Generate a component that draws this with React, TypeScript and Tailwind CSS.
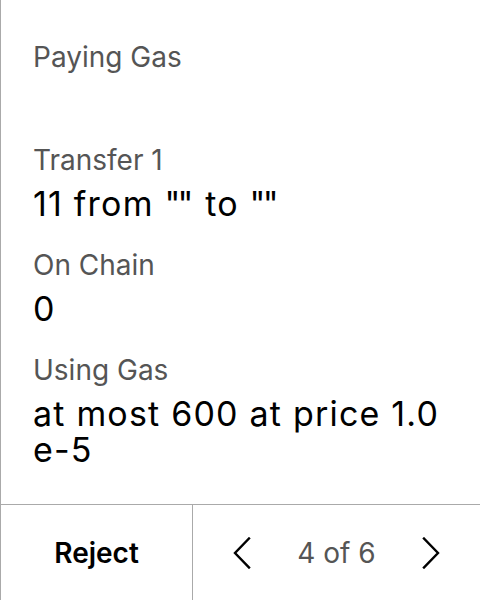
// Transaction review card: summary fields with a pager footer.
import type { ReactNode } from "react";

// the pair of quotes sits tighter than the font's default advance
function Empty() {
  return (
    <>
      <span className="tracking-[-2.8px]">"</span>"
    </>
  );
}

const fields: { label: string; value: ReactNode }[] = [
  {
    label: "Transfer 1",
    value: (
      <>
        11 from <Empty /> to <Empty />
      </>
    ),
  },
  { label: "On Chain", value: "0" },
  { label: "Using Gas", value: "at most 600 at price 1.0 e-5" },
];

function Chevron({ dir }: { dir: "left" | "right" }) {
  return (
    <svg width="18" height="32" viewBox="0 0 18 32" fill="none" aria-hidden="true">
      <path
        d={dir === "left" ? "M16 1.5 L2 16 L16 30.5" : "M2 1.5 L16 16 L2 30.5"}
        stroke="#000"
        strokeWidth="2.4"
        strokeLinecap="square"
      />
    </svg>
  );
}

export default function App() {
  return (
    <div
      className="flex h-[600px] w-[480px] flex-col border-l border-[#aaaaaa] bg-white"
      style={{ fontFamily: "Inter, 'Noto Sans', sans-serif" }}
    >
      <div className="flex-1 pl-8 pr-6 pt-[39px]">
        <p className="text-[28px] leading-[36px] text-[#555555]">Paying Gas</p>

        <div className="mt-[67px] space-y-[25px]">
          {fields.map((f) => (
            <div key={f.label}>
              <p className="text-[28px] leading-[36px] text-[#555555]">{f.label}</p>
              <p className="mt-2 text-[34px] leading-[36px] tracking-[1.2px] text-black">
                {f.value}
              </p>
            </div>
          ))}
        </div>
      </div>

      <div className="flex h-[96px] border-t border-[#aaaaaa]">
        <button className="w-[192px] border-r border-[#aaaaaa] text-[28px] font-semibold text-black">
          Reject
        </button>
        <div className="flex flex-1 items-center justify-center gap-[46px]">
          <Chevron dir="left" />
          <span className="text-[28px] text-[#555555]">4 of 6</span>
          <Chevron dir="right" />
        </div>
      </div>
    </div>
  );
}
